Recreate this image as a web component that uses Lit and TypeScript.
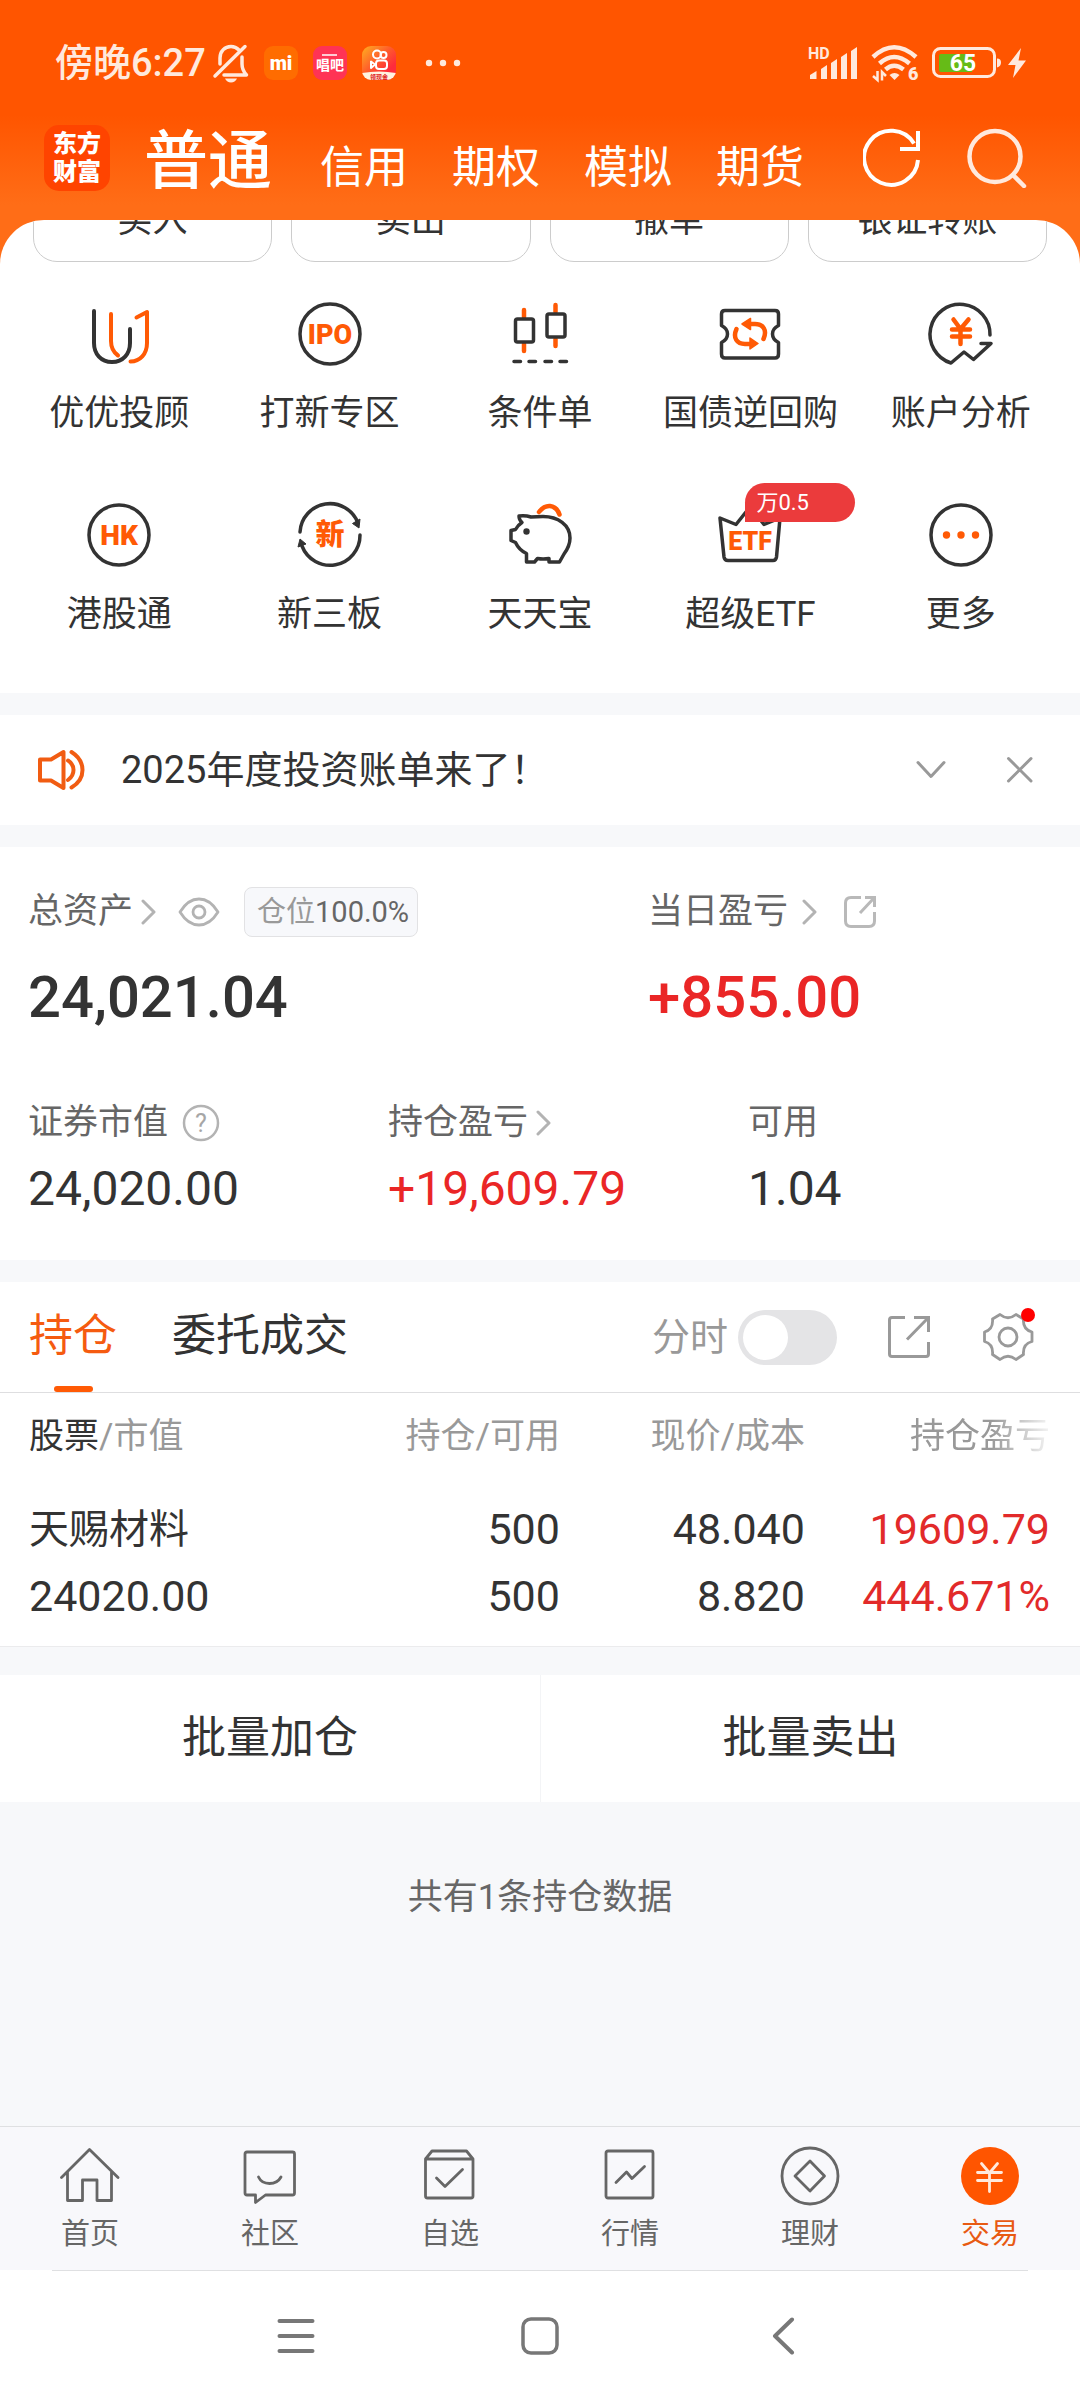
import { LitElement, html, svg, css, nothing } from "lit";
import { customElement, state } from "lit/decorators.js";
import { classMap } from "lit/directives/class-map.js";

const INK = "#333333";
const ORANGE = "#ff5a05";

/* ---------- icon drawings ---------- */

const shortcutArt = {
  advisor: svg`
    <g fill="none" stroke-width="4" stroke-linecap="round" stroke-linejoin="round">
      <path stroke=${INK} d="M7 9V41C7 52 14 60 25 60S43 52 43 41V27"/>
      <path stroke=${ORANGE} d="M24 12V39C24 46 26 50 31 53.5"/>
      <path stroke=${ORANGE} d="M49.5 15.5L60 10V41C60 52 53 59.5 43.5 59.5"/>
    </g>`,
  ipo: svg`
    <circle cx="32" cy="32" r="30" fill="none" stroke=${INK} stroke-width="3.5"/>
    <text x="32" y="42" text-anchor="middle" font-family="Roboto, sans-serif" font-weight="900" font-size="27" fill=${ORANGE}>IPO</text>`,
  condition: svg`
    <g fill="none" stroke-linecap="round">
      <path stroke=${ORANGE} stroke-width="4.5" d="M16 8V15M16 42V49M47.5 3V10M47.5 37V44"/>
      <rect x="7.5" y="17" width="18" height="23" rx="2" stroke=${INK} stroke-width="3.5"/>
      <rect x="39" y="12" width="18" height="23" rx="2" stroke=${INK} stroke-width="3.5"/>
      <path stroke=${INK} stroke-width="3.5" d="M6 59.5H12.5M21 59.5H27.5M37 59.5H43.5M52 59.5H58.5"/>
    </g>`,
  repo: svg`
    <path fill="none" stroke=${INK} stroke-width="3.5" stroke-linejoin="round"
      d="M7 8.5H57Q60.5 8.5 60.5 12V23.5Q54.5 26.5 54.5 32T60.5 40.5V52Q60.5 56 57 56H7Q3.5 56 3.5 52V40.5Q9.5 37.5 9.5 32T3.5 23.5V12Q3.5 8.5 7 8.5Z"/>
    <g fill="none" stroke=${ORANGE} stroke-width="4.5" stroke-linecap="round">
      <path d="M45.5 37C49.5 28 45 22 37 22H32"/>
      <path d="M18.5 27C14.5 36 19 42 27 42H32"/>
    </g>
    <path fill=${ORANGE} stroke=${ORANGE} stroke-width="1.5" stroke-linejoin="round" d="M24 22L32.5 16.5V27.5ZM40 41.5L32 36V47Z"/>`,
  analysis: svg`
    <path fill="none" stroke=${INK} stroke-width="3.5" stroke-linejoin="round" stroke-linecap="round"
      d="M61 33A30 30 0 1 0 22 61L35 50L44.5 57.5L62 41.5H52"/>
    <path fill="none" stroke=${ORANGE} stroke-width="4.5" stroke-linecap="round" stroke-linejoin="round"
      d="M24.5 17.5L31.5 27L39.5 17.5M23 27.5H41M23 34.5H41M31.5 27V42"/>`,
  hk: svg`
    <circle cx="32" cy="32" r="30" fill="none" stroke=${INK} stroke-width="3.5"/>
    <text x="32" y="42" text-anchor="middle" font-family="Roboto, sans-serif" font-weight="900" font-size="28" fill=${ORANGE}>HK</text>`,
  neeq: svg`
    <g fill="none" stroke=${INK} stroke-width="3.5" stroke-linecap="round">
      <path d="M2 29A30 30 0 0 1 60 20"/>
      <path d="M62 32A30 30 0 0 1 4 43"/>
    </g>
    <path fill=${INK} stroke=${INK} stroke-width="1" stroke-linejoin="round" d="M54.5 20.5L62 16L61 25ZM0 44L2 36L8 41Z"/>
    <text x="32" y="42" text-anchor="middle" font-family="Noto Sans CJK SC, sans-serif" font-weight="900" font-size="29" fill=${ORANGE}>新</text>`,
  piggy: svg`
    <path fill="none" stroke=${ORANGE} stroke-width="4.5" stroke-linecap="round" d="M31 9Q36 2.5 42 3Q49 4 51.5 11.5"/>
    <path fill="none" stroke=${INK} stroke-width="3.5" stroke-linejoin="round" stroke-linecap="round"
      d="M11 13Q17 12 23 14Q28 13.5 35 13.5C50 13.5 62 22 62 35Q62 43 56 51L51.5 59H41V55.5Q35 56.5 29.5 55.5L26.5 59H18.5V50.5Q11 47 7.5 39.5L3 37.5V27.5L7.5 26.5Q10 22 14 19.5Q11 17 11 13Z"/>
    <circle cx="18.5" cy="28.5" r="3.2" fill=${INK}/>`,
  etf: svg`
    <path fill="none" stroke=${INK} stroke-width="3.5" stroke-linejoin="round"
      d="M2 15L18 21.5L32 4L46 21.5L62 15L58.5 54Q58 57.5 55 57.5H10Q6.5 57.5 6 54Z"/>
    <text x="32" y="47" text-anchor="middle" font-family="Roboto, sans-serif" font-weight="900" font-size="25" fill=${ORANGE}>ETF</text>`,
  more: svg`
    <circle cx="32" cy="32" r="30" fill="none" stroke=${INK} stroke-width="3.5"/>
    <g fill=${ORANGE}><circle cx="17.5" cy="32" r="3.7"/><circle cx="32" cy="32" r="3.7"/><circle cx="46.5" cy="32" r="3.7"/></g>`,
};

const tabArt = {
  home: svg`<path d="M1.5 31.5L29.5 3.5L58 31.5M7.5 26V54.5H22.5V34H37V54.5H51.5V26"/>`,
  community: svg`
    <path d="M7 6H52.5Q54.5 6 54.5 8V47Q54.5 49 52.5 49H25.5L15.5 56.5V49H7Q5 49 5 47V8Q5 6 7 6Z"/>
    <path d="M18.5 31Q21.5 37.5 29.5 37.5T41 31"/>`,
  watch: svg`
    <path d="M5.5 13V50Q5.5 52 7.5 52H51Q53 52 53 50V13ZM5.5 13L12 5H46.5L53 13"/>
    <path d="M16.5 32L25 40.5L42.5 23.5"/>`,
  market: svg`
    <rect x="6" y="5" width="47" height="47" rx="2"/>
    <path d="M16 36.5L26.5 26L32 32.5L44.5 20.5"/>`,
  wealth: svg`
    <circle cx="30" cy="30" r="28"/>
    <path d="M30 15L44.5 30L30 45L15 30Z"/>`,
  trade: svg`
    <circle cx="30" cy="30" r="29" fill="#ff5500" stroke="none"/>
    <path stroke="#ffe9dc" d="M21.5 17.5L29.5 27L37.5 17.5M17.5 26.5H41.5M17.5 34.5H41.5M29.5 27V45.5"/>`,
};

type ShortcutKey = keyof typeof shortcutArt;
type TabKey = keyof typeof tabArt;

const SHORTCUTS: { icon: ShortcutKey; label: string; badge?: string }[] = [
  { icon: "advisor", label: "优优投顾" },
  { icon: "ipo", label: "打新专区" },
  { icon: "condition", label: "条件单" },
  { icon: "repo", label: "国债逆回购" },
  { icon: "analysis", label: "账户分析" },
  { icon: "hk", label: "港股通" },
  { icon: "neeq", label: "新三板" },
  { icon: "piggy", label: "天天宝" },
  { icon: "etf", label: "超级ETF", badge: "万0.5" },
  { icon: "more", label: "更多" },
];

const TABS: { icon: TabKey; label: string }[] = [
  { icon: "home", label: "首页" },
  { icon: "community", label: "社区" },
  { icon: "watch", label: "自选" },
  { icon: "market", label: "行情" },
  { icon: "wealth", label: "理财" },
  { icon: "trade", label: "交易" },
];

const HOLDINGS = [
  { name: "天赐材料", value: "24020.00", held: "500", free: "500", price: "48.040", cost: "8.820", gain: "19609.79", rate: "444.671%" },
];

const base = css`
  :host, * { box-sizing: border-box; }
  button {
    margin: 0; padding: 0; border: 0; background: none;
    font: inherit; color: inherit; cursor: pointer;
  }
  a { color: inherit; text-decoration: none; }
  svg { display: block; flex: none; }
`;

/* ---------- system status bar ---------- */

@customElement("status-bar")
class StatusBar extends LitElement {
  static styles = [base, css`
    :host { display: flex; justify-content: space-between; align-items: center; height: 126px; padding: 0 54px 0 55px; color: #ffe9dd; }
    .group { display: flex; align-items: center; }
    .group svg { overflow: visible; }
    .time { font-size: 38px; line-height: 44px; font-weight: 500; }
    .left { gap: 15px; }
    .right { gap: 13px; }
    .bell { margin-left: -8px; }
    .group .app { width: 34px; height: 34px; border-radius: 9px; overflow: hidden; }
    .dots { margin-left: 14px; }
    .bolt { margin-left: -7px; }
  `];
  render() {
    return html`
      <div class="group left">
        <span class="time">傍晚6:27</span>
        <svg class="bell" width="36" height="38" viewBox="0 0 36 38" fill="none" stroke="currentColor" stroke-width="3.5" stroke-linecap="round" stroke-linejoin="round">
          <path d="M7 20V14C7 7 12 2.5 18 2.5C21 2.5 24 4 26 6M29 13V20Q29 26 33.5 31H11M2 32L32 2.5"/>
          <path d="M12 34.5H24Q22 38.5 18 38.5T12 34.5Z" fill="currentColor" stroke="none"/>
        </svg>
        <svg class="app" viewBox="0 0 34 34">
          <rect width="34" height="34" fill="#ff6c00"/>
          <text x="17" y="24" text-anchor="middle" font-family="Roboto, sans-serif" font-weight="900" font-size="20" fill="#fff">mi</text>
        </svg>
        <svg class="app" viewBox="0 0 34 34">
          <rect width="34" height="34" fill="#ff3355"/>
          <text x="17" y="24" text-anchor="middle" font-family="Noto Sans CJK SC, sans-serif" font-weight="700" font-size="14" fill="#fff">唱吧</text>
          <path d="M9 9H24" fill="none" stroke="#fff" stroke-width="1.5"/>
        </svg>
        <svg class="app" viewBox="0 0 34 34">
          <defs><linearGradient id="warm" x1="0" y1="0" x2="1" y2="1"><stop offset="0" stop-color="#ffb020"/><stop offset=".45" stop-color="#ff5a2c"/><stop offset=".75" stop-color="#fe2b3c"/></linearGradient></defs>
          <rect width="34" height="34" fill="url(#warm)"/>
          <g fill="none" stroke="#fff" stroke-width="2">
            <circle cx="15" cy="8.5" r="4"/><circle cx="21.5" cy="9" r="3"/>
            <rect x="14" y="14.5" width="11" height="8.5" rx="3"/>
            <path d="M13 18.5L9 15.5V22Z" stroke-linejoin="round"/>
          </g>
          <path d="M0 27Q17 24 34 27V34H0Z" fill="#fff3e0"/>
          <text x="17" y="33" text-anchor="middle" font-family="Noto Sans CJK SC, sans-serif" font-weight="700" font-size="6" fill="#e02020">领现金</text>
        </svg>
        <svg class="dots" width="36" height="8" viewBox="0 0 36 8" fill="currentColor"><circle cx="4" cy="4" r="3.2"/><circle cx="18" cy="4" r="3.2"/><circle cx="32" cy="4" r="3.2"/></svg>
      </div>
      <div class="group right">
        <svg width="50" height="34" viewBox="0 0 50 34" fill="currentColor">
          <text x="0" y="13" font-family="Roboto, sans-serif" font-weight="700" font-size="16">HD</text>
          <path d="M2 33V29L8.5 25V33ZM13 33V23L19 19V33ZM23 33V17L29 13V33ZM33 33V11L39 7V33ZM43 33V5L49 1V33Z"/>
        </svg>
        <svg width="48" height="38" viewBox="0 0 48 38" fill="none" stroke="currentColor" stroke-width="4.5">
          <path d="M2 13Q23 -6.5 45 13M8.5 19.5Q23 6.5 38.5 19.5M14.5 25.5Q23 18 32.5 25.5"/>
          <path d="M18.5 31Q23.5 27 28.5 31L23.5 36Z" fill="currentColor" stroke="none"/>
          <path d="M6.500 27V36L2 32M11 36.500V28L15 32" stroke-width="2.5"/>
          <text x="37" y="36" font-family="Roboto, sans-serif" font-weight="900" font-size="18" fill="currentColor" stroke="none">6</text>
        </svg>
        <svg width="70" height="32" viewBox="0 0 70 32">
          <rect x="1.5" y="1.5" width="61" height="28" rx="7" fill="none" stroke="currentColor" stroke-width="3"/>
          <path d="M9 7H40V25H9Q7 25 7 23V9Q7 7 9 7Z" fill="#66bb17"/>
          <path d="M65 11.5Q69 11.5 69 15.5T65 20.5Z" fill="currentColor"/>
          <text x="31" y="24" text-anchor="middle" font-family="Roboto, sans-serif" font-weight="700" font-size="23" fill="#fff">65</text>
        </svg>
        <svg class="bolt" width="18" height="32" viewBox="0 0 18 32" fill="currentColor"><path d="M13 1L0 18H7.5L5 31L18 13.5H10.5Z"/></svg>
      </div>`;
  }
}

/* ---------- orange account header ---------- */

@customElement("account-header")
class AccountHeader extends LitElement {
  static styles = [base, css`
    :host { display: flex; align-items: center; height: 94px; padding: 0 53px 30px 44px; color: #fff; }
    .logo {
      width: 66px; height: 66px; border-radius: 15px; background: #ff4400;
      display: flex; flex-direction: column; align-items: center; justify-content: center;
      font-size: 24px; line-height: 28px; font-weight: 900; flex: none;
    }
    .accounts { display: flex; align-items: baseline; gap: 44px; margin-left: 34px; padding-top: 14px; line-height: 64px; font-size: 44px; }
    .active { font-size: 64px; font-weight: 500; margin-right: 4px; }
    .tools { display: flex; gap: 46px; margin-left: auto; }
  `];
  render() {
    return html`
      <div class="logo"><span>东方</span><span>财富</span></div>
      <nav class="accounts">
        <button class="active">普通</button>
        <button>信用</button><button>期权</button><button>模拟</button><button>期货</button>
      </nav>
      <div class="tools">
        <button aria-label="刷新"><svg width="58" height="60" viewBox="0 0 58 60" fill="none" stroke="#fff" stroke-width="4">
          <path d="M55 32A27 27 0 1 1 51 15.5M55 3V21H37"/></svg></button>
        <button aria-label="搜索"><svg width="60" height="60" viewBox="0 0 60 60" fill="none" stroke="#ffe9dd" stroke-width="4.5" stroke-linecap="round">
          <circle cx="28" cy="28.5" r="25.5"/><path d="M46 47L57 58"/></svg></button>
      </div>`;
  }
}

/* ---------- shortcuts ---------- */

@customElement("shortcut-panel")
class ShortcutPanel extends LitElement {
  static styles = [base, css`
    :host { display: block; background: #fff; border-radius: 44px 44px 0 0; overflow: hidden; color: #333; font-size: 35px; line-height: 42px; padding-bottom: 57px; }
    .actions { display: grid; grid-template-columns: repeat(4, 1fr); gap: 19px; padding: 0 33px; margin-top: -41px; }
    .action { height: 83px; border: 1px solid #cccccc; border-radius: 24px; }
    .grid { display: grid; grid-template-columns: repeat(5, 1fr); row-gap: 68px; padding: 40px 14px 0; }
    .item { display: flex; flex-direction: column; align-items: center; gap: 27px; white-space: nowrap; }
    .icon { position: relative; }
    .badge {
      position: absolute; left: 27px; top: -20px; width: 110px; height: 39px; padding-left: 11px;
      border-radius: 20px 20px 20px 0; background: #eb3b3c; color: #fff;
      font-size: 22px; line-height: 40px; text-align: left;
    }
  `];
  render() {
    return html`
      <div class="actions">
        ${["买入", "卖出", "撤单", "银证转账"].map((t) => html`<button class="action">${t}</button>`)}
      </div>
      <div class="grid">
        ${SHORTCUTS.map((s) => html`
          <button class="item">
            <span class="icon">
              <svg width="64" height="64" viewBox="0 0 64 64" overflow="visible">${shortcutArt[s.icon]}</svg>
              ${s.badge ? html`<span class="badge">${s.badge}</span>` : nothing}
            </span>
            <span>${s.label}</span>
          </button>`)}
      </div>`;
  }
}

/* ---------- notice strip ---------- */

@customElement("notice-strip")
class NoticeStrip extends LitElement {
  static styles = [base, css`
    :host { display: flex; align-items: center; height: 110px; padding: 0 46px 0 37px; background: #fff; color: #333; }
    .text { font-size: 38px; line-height: 46px; margin-left: 36px; flex: 1; }
    .tools { display: flex; align-items: center; gap: 60px; }
  `];
  render() {
    return html`
      <svg width="48" height="42" viewBox="0 0 48 42" fill="none" stroke="#f15c12" stroke-width="4" stroke-linejoin="round" stroke-linecap="round">
        <path d="M3 10.5H14L26.5 3V39L14 31.5H3Z"/>
        <path d="M31 11.5Q36.5 15 36.5 21T31 31M34.5 3Q45.5 10 45.5 21T34.5 38.5"/>
      </svg>
      <a class="text" href="#bill">2025年度投资账单来了！</a>
      <div class="tools">
        <button aria-label="展开"><svg width="30" height="24" viewBox="0 0 30 24" fill="none" stroke="#999" stroke-width="3" stroke-linecap="round" stroke-linejoin="round"><path d="M2 4.5L15 18.5L28 4.5"/></svg></button>
        <button aria-label="关闭"><svg width="28" height="28" viewBox="0 0 28 28" fill="none" stroke="#999" stroke-width="3" stroke-linecap="round"><path d="M2.5 2.5L25 25M25 2.5L2.5 25"/></svg></button>
      </div>`;
  }
}

/* ---------- asset summary ---------- */

const chevron = html`<svg width="15" height="26" viewBox="0 0 15 26" fill="none" stroke="#b3b3b3" stroke-width="3" stroke-linecap="round" stroke-linejoin="round"><path d="M2 2L13 13L2 24"/></svg>`;

@customElement("asset-summary")
class AssetSummary extends LitElement {
  static styles = [base, css`
    :host { display: block; background: #fff; color: #333; padding: 40px 0 41px; }
    .main { display: grid; grid-template-columns: 31fr 23fr; }
    .sub { display: grid; grid-template-columns: repeat(3, 1fr); margin-top: 65px; }
    .cell { padding-left: 28px; display: flex; flex-direction: column; }
    .label { display: flex; align-items: center; font-size: 35px; line-height: 50px; color: #666; height: 50px; }
    .link { display: flex; align-items: center; gap: 8px; }
    .wide { gap: 14px; }
    .eye { margin-left: 22px; }
    .tag { margin-left: 24px; height: 50px; padding: 0 8px 0 12px; border: 1px solid #e2e2e4; border-radius: 8px; background: #f7f8fb; font-size: 29px; line-height: 48px; color: #666; white-space: nowrap; }
    .tag span { color: #999; }
    .share { margin-left: 26px; }
    .help { margin-left: 14px; }
    .big { font-size: 58px; line-height: 72px; font-weight: 500; margin-top: 24px; }
    .num { font-size: 48px; line-height: 60px; margin-top: 11px; }
    .up { color: #ea2626; }
  `];
  render() {
    return html`
      <div class="main">
        <div class="cell">
          <div class="label">
            <button class="link">总资产${chevron}</button>
            <button class="eye" aria-label="隐藏金额"><svg width="42" height="30" viewBox="0 0 42 30" fill="none" stroke="#b3b3b3" stroke-width="2.8"><path d="M2 15Q10 2 21 2T40 15Q32 28 21 28T2 15Z" stroke-linejoin="round"/><circle cx="21" cy="15" r="6"/></svg></button>
            <span class="tag"><span>仓位</span>100.0%</span>
          </div>
          <div class="big">24,021.04</div>
        </div>
        <div class="cell">
          <div class="label">
            <button class="link wide">当日盈亏${chevron}</button>
            <button class="share" aria-label="分享"><svg width="34" height="34" viewBox="0 0 34 34" fill="none" stroke="#b9b9b9" stroke-width="3"><path d="M18 2.5H8Q2.5 2.5 2.5 8V26Q2.5 31.5 8 31.5H26Q31.5 31.5 31.5 26V17M22 2.5H31.5V12M31 3L17 18"/></svg></button>
          </div>
          <div class="big up">+855.00</div>
        </div>
      </div>
      <div class="sub">
        <div class="cell">
          <div class="label">证券市值
            <button class="help" aria-label="说明"><svg width="38" height="38" viewBox="0 0 38 38"><circle cx="19" cy="19" r="17" fill="none" stroke="#b3b3b3" stroke-width="2.5"/><text x="19" y="28" text-anchor="middle" font-family="Roboto, sans-serif" font-size="25" fill="#a6a6a6">?</text></svg></button>
          </div>
          <div class="num">24,020.00</div>
        </div>
        <div class="cell">
          <div class="label"><button class="link">持仓盈亏${chevron}</button></div>
          <div class="num up">+19,609.79</div>
        </div>
        <div class="cell">
          <div class="label">可用</div>
          <div class="num">1.04</div>
        </div>
      </div>`;
  }
}

/* ---------- holdings ---------- */

@customElement("holdings-panel")
class HoldingsPanel extends LitElement {
  static styles = [base, css`
    :host { display: block; color: #333; }
    .bar { display: flex; align-items: center; height: 111px; padding: 0 46px 0 29px; background: #fff; border-bottom: 1px solid #dedee0; }
    .tabs { display: flex; align-self: stretch; gap: 55px; font-size: 44px; }
    .tab { display: flex; flex-direction: column; align-items: center; justify-content: flex-end; gap: 24px; line-height: 52px; }
    .tab::after { content: ""; width: 39px; height: 6px; border-radius: 3px; }
    .active { color: #f55b10; }
    .active::after { background: #ff5a05; }
    .tools { display: flex; align-items: center; margin-left: auto; }
    .switch { display: flex; align-items: center; gap: 10px; font-size: 38px; line-height: 46px; color: #999; }
    .toggle { appearance: none; margin: 0; width: 99px; height: 55px; border-radius: 28px; background: #e4e4e6; padding: 5px; display: flex; }
    .toggle::before { content: ""; width: 45px; height: 45px; border-radius: 50%; background: #fff; }
    .toggle:checked { background: #ff5a05; justify-content: flex-end; }
    .share { margin-left: 50px; }
    .gear { margin-left: 52px; position: relative; }
    .dot { position: absolute; right: -1px; top: -4px; width: 14px; height: 14px; border-radius: 50%; background: #ff0000; }
    .sheet { background: #fff; padding: 18px 30px 16px 29px; border-bottom: 1px solid #ebebed; }
    table { width: 100%; table-layout: fixed; border-collapse: collapse; }
    th { font-size: 35px; line-height: 52px; font-weight: 400; color: #999; text-align: right; padding: 0; white-space: nowrap; }
    th:first-child, td:first-child { text-align: left; width: 28%; }
    th b { font-weight: 400; color: #333; }
    .fade { -webkit-mask-image: linear-gradient(to right, #000 76%, rgba(0, 0, 0, 0.1)); mask-image: linear-gradient(to right, #000 76%, rgba(0, 0, 0, 0.1)); }
    td { padding: 33px 0 0; font-size: 43px; line-height: 67px; text-align: right; white-space: nowrap; }
    td div { height: 67px; }
    .name { font-size: 40px; }
    .up { color: #e22a2a; }
    .batch { display: grid; grid-template-columns: 1fr 1fr; margin-top: 28px; background: #fff; }
    .batch button { font-size: 44px; line-height: 52px; padding: 37px 0 38px; }
    .batch button + button { border-left: 1px solid #f3f4f6; }
    .count { margin: 0; padding: 74px 0; text-align: center; font-size: 35px; line-height: 44px; color: #666; }
  `];
  @state() private minute = false;
  render() {
    return html`
      <div class="bar">
        <div class="tabs">
          <button class="tab active">持仓</button>
          <button class="tab">委托成交</button>
        </div>
        <div class="tools">
          <label class="switch">分时<input class="toggle" type="checkbox" .checked=${this.minute}
            @change=${(e: Event) => (this.minute = (e.target as HTMLInputElement).checked)}></label>
          <button class="share" aria-label="分享"><svg width="44" height="44" viewBox="0 0 44 44" fill="none" stroke="#999" stroke-width="3"><path d="M18 2.5H5Q2.5 2.5 2.5 5V39Q2.5 41.5 5 41.5H39Q41.5 41.5 41.5 39V27M27 2.5H41.5V17M41 3L20 24.5"/></svg></button>
          <button class="gear" aria-label="设置">
            <svg width="51" height="50" viewBox="0 0 51 50" fill="none" stroke="#999" stroke-width="2.8" stroke-linejoin="round"><path d="M17 2.5Q25 9 33 2.5L40.5 7Q39.5 17.5 49 20V29.5Q39.5 32 40.5 42.5L33 47.5Q25 41 17 47.5L9.5 42.5Q10.5 32 1.5 29.5V20Q10.5 17.5 9.5 7Z"/><circle cx="25" cy="25" r="9"/></svg>
            <span class="dot"></span>
          </button>
        </div>
      </div>
      <div class="sheet">
        <table>
          <thead><tr>
            <th scope="col"><b>股票</b>/市值</th>
            <th scope="col">持仓/可用</th>
            <th scope="col">现价/成本</th>
            <th scope="col"><div class="fade">持仓盈亏</div></th>
          </tr></thead>
          <tbody>
            ${HOLDINGS.map((h) => html`<tr>
              <td><div class="name">${h.name}</div><div>${h.value}</div></td>
              <td><div>${h.held}</div><div>${h.free}</div></td>
              <td><div>${h.price}</div><div>${h.cost}</div></td>
              <td class="up"><div>${h.gain}</div><div>${h.rate}</div></td>
            </tr>`)}
          </tbody>
        </table>
      </div>
      <div class="batch"><button>批量加仓</button><button>批量卖出</button></div>
      <p class="count">共有${HOLDINGS.length}条持仓数据</p>`;
  }
}

/* ---------- bottom navigation ---------- */

@customElement("bottom-tabs")
class BottomTabs extends LitElement {
  static styles = [base, css`
    :host { display: block; }
    .tabs { display: grid; grid-template-columns: repeat(6, 1fr); border-top: 1px solid #dfe0e2; background: #f8f8fb; height: 144px; padding-top: 19px; }
    .tab { display: flex; flex-direction: column; align-items: center; gap: 10px; font-size: 29px; line-height: 36px; color: #666; }
    .active { color: #e85a12; }
    .keys { display: grid; grid-template-columns: repeat(3, 1fr); align-items: center; justify-items: center; height: 130px; margin: 0 52px; padding: 0 122px; border-top: 1px solid #dfe0e2; }
    .system { background: #fff; }
  `];
  render() {
    return html`
      <nav class="tabs">
        ${TABS.map((t) => html`
          <a class=${classMap({ tab: true, active: t.icon === "trade" })} href="#${t.icon}">
            <svg width="60" height="60" viewBox="0 0 60 60" fill="none" stroke="#666" stroke-width="2.8" stroke-linejoin="round" stroke-linecap="round">${tabArt[t.icon]}</svg>
            <span>${t.label}</span>
          </a>`)}
      </nav>
      <div class="system"><div class="keys">
        <button aria-label="菜单"><svg width="38" height="38" viewBox="0 0 38 38" fill="none" stroke="#777" stroke-width="4" stroke-linecap="round"><path d="M2.5 4H35.5M2.5 19H35.5M2.5 34H35.5"/></svg></button>
        <button aria-label="主页"><svg width="38" height="38" viewBox="0 0 38 38" fill="none" stroke="#777" stroke-width="3.5"><rect x="2" y="2" width="34" height="34" rx="8"/></svg></button>
        <button aria-label="返回"><svg width="38" height="38" viewBox="0 0 38 38" fill="none" stroke="#777" stroke-width="4" stroke-linecap="round" stroke-linejoin="round"><path d="M27 2.5L10 19L27 35.5"/></svg></button>
      </div></div>`;
  }
}

/* ---------- page ---------- */

@customElement("app-root")
class AppRoot extends LitElement {
  static styles = css`
    :host {
      display: flex; flex-direction: column; min-height: 100vh; background: #f7f8fa;
      font-family: Roboto, "Noto Sans CJK SC", sans-serif;
    }
    .top { background: linear-gradient(#ff5500 0, #ff5500 115px, #ff6d17 205px, #ff6d17 100%); }
    .sections { display: flex; flex-direction: column; gap: 22px; padding-top: 22px; }
    .footer { margin-top: auto; }
  `;
  render() {
    return html`
      <div class="top">
        <status-bar></status-bar>
        <account-header></account-header>
        <shortcut-panel></shortcut-panel>
      </div>
      <div class="sections">
        <notice-strip></notice-strip>
        <asset-summary></asset-summary>
        <holdings-panel></holdings-panel>
      </div>
      <bottom-tabs class="footer"></bottom-tabs>`;
  }
}
